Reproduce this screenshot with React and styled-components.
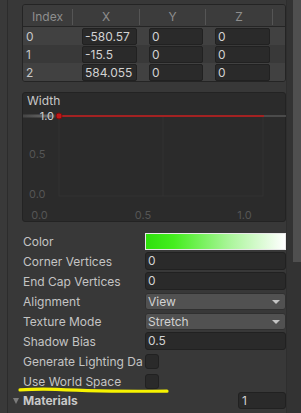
import React from "react"
import styled, { createGlobalStyle } from "styled-components"

const GlobalStyle = createGlobalStyle`
	html, body {
		margin: 0;
		padding: 0;
		background: #383838;
	}
	body {
		font-family: Inter, "Noto Sans", sans-serif;
		font-size: 12px;
		color: #c4c4c4;
	}
`

const points = [
	{ index: 0, x: "-580.57", y: "0", z: "0" },
	{ index: 1, x: "-15.5", y: "0", z: "0" },
	{ index: 2, x: "584.055", y: "0", z: "0" },
]

function App() {
	return (
		<Root>
			<GlobalStyle />
			<Gutter />
			<Main>
				<Table>
					<HeaderRow>
						<HeaderCell>Index</HeaderCell>
						<HeaderCell>X</HeaderCell>
						<HeaderCell>Y</HeaderCell>
						<HeaderCell>Z</HeaderCell>
						<HeaderCell $last />
					</HeaderRow>
					{points.map((p) => (
						<TableRow key={p.index} $odd={p.index % 2 === 1}>
							<IndexCell>{p.index}</IndexCell>
							<Cell>
								<NumField>{p.x}</NumField>
							</Cell>
							<Cell>
								<NumField>{p.y}</NumField>
							</Cell>
							<Cell>
								<NumField>{p.z}</NumField>
							</Cell>
							<span />
						</TableRow>
					))}
				</Table>

				<CurvePanel>
					<CurveTitle>Width</CurveTitle>
					<CurveGraph />
				</CurvePanel>

				<Props>
					<PropRow>
						<Label>Color</Label>
						<ColorSwatch />
					</PropRow>
					<PropRow>
						<Label>Corner Vertices</Label>
						<Field>0</Field>
					</PropRow>
					<PropRow>
						<Label>End Cap Vertices</Label>
						<Field>0</Field>
					</PropRow>
					<PropRow>
						<Label>Alignment</Label>
						<Dropdown>
							View
							<Arrow />
						</Dropdown>
					</PropRow>
					<PropRow>
						<Label>Texture Mode</Label>
						<Dropdown>
							Stretch
							<Arrow />
						</Dropdown>
					</PropRow>
					<PropRow>
						<Label>Shadow Bias</Label>
						<Field>0.5</Field>
					</PropRow>
					<PropRow>
						<Label>Generate Lighting Da</Label>
						<Checkbox />
					</PropRow>
					<PropRow>
						<Label>Use World Space</Label>
						<Checkbox />
					</PropRow>
					<Foldout>
						<FoldTitle>
							<Caret />
							Materials
						</FoldTitle>
						<SizeField>1</SizeField>
					</Foldout>
					<Scribble viewBox="0 0 152 8" width="152" height="8">
						<path
							d="M2 3.8 C 12 3.2, 28 3, 38 3.3 C 60 4.4, 100 5.4, 149 5.2"
							stroke="#f6f200"
							strokeWidth="3.2"
							fill="none"
							strokeLinecap="round"
						/>
					</Scribble>
				</Props>
			</Main>
			<Scrollbar>
				<Thumb />
			</Scrollbar>
		</Root>
	)
}

function CurveGraph() {
	return (
		<GraphSvg width="264" height="114" viewBox="0 0 264 114">
			<defs>
				<linearGradient id="hl" x1="0" x2="1" y1="0" y2="0">
					<stop offset="0" stopColor="#454545" />
					<stop offset="0.8" stopColor="#6a6a6a" />
					<stop offset="1" stopColor="#6a6a6a" stopOpacity="0" />
				</linearGradient>
			</defs>
			<rect x="36" y="9" width="204" height="80" fill="none" stroke="#333" />
			<line x1="140" y1="9" x2="140" y2="89" stroke="#333" />
			<rect x="0" y="7.5" width="34" height="3" fill="url(#hl)" />
			<line x1="36" y1="9" x2="241" y2="9" stroke="#a32222" strokeWidth="2" />
			<line x1="241" y1="9" x2="264" y2="9" stroke="#6c6c6c" strokeWidth="1" />
			<circle cx="36" cy="9" r="3" fill="#c01818" stroke="#7a0d0d" strokeWidth="1" />
			<AxisText x="31" y="13" textAnchor="end" $bright>
				1.0
			</AxisText>
			<AxisText x="6" y="51">0.5</AxisText>
			<AxisText x="6" y="91">0.0</AxisText>
			<AxisText x="16.5" y="112" textAnchor="middle">
				0.0
			</AxisText>
			<AxisText x="120" y="112" textAnchor="middle">
				0.5
			</AxisText>
			<AxisText x="221.5" y="112" textAnchor="middle">
				1.0
			</AxisText>
		</GraphSvg>
	)
}

const Root = styled.div`
	display: flex;
	width: 301px;
	height: 413px;
	overflow: hidden;
	background: #383838;
`

const Gutter = styled.div`
	width: 7px;
	flex: none;
	background: #393939;
	border-right: 1px solid #2c2c2c;
`

const Main = styled.div`
	flex: 1;
	padding: 4px 0 0 14px;
	display: flex;
	flex-direction: column;
	min-width: 0;
`

const Scrollbar = styled.div`
	width: 14px;
	flex: none;
	display: flex;
	justify-content: flex-end;
	background: #333;
	border-left: 1px solid #2e2e2e;
`

const Thumb = styled.div`
	width: 8px;
	height: 262px;
	background: #4f4f4f;
`

const Table = styled.div`
	border: 1px solid #242424;
	border-radius: 3px;
	overflow: hidden;
`

const columns = "50px 67px 66px 67px 1fr"

const HeaderRow = styled.div`
	display: grid;
	grid-template-columns: ${columns};
	height: 21px;
	background: #3c3c3c;
	border-bottom: 1px solid #252525;
`

const HeaderCell = styled.div`
	display: flex;
	align-items: center;
	justify-content: center;
	color: #8e8e8e;
	font-size: 12px;
	border-right: ${(p) => (p.$last ? "none" : "1px solid #555")};
	margin: 4px 0 1px;
	line-height: 1;
`

const TableRow = styled.div`
	display: grid;
	grid-template-columns: ${columns};
	height: 18px;
	background: ${(p) => (p.$odd ? "#393939" : "#414141")};
	align-items: center;
`

const IndexCell = styled.div`
	padding-left: 3px;
	color: #c8c8c8;
`

const Cell = styled.div`
	padding: 0 3px 0 9px;
	height: 100%;
	display: flex;
	align-items: center;
`

const NumField = styled.div`
	flex: 1;
	height: 17px;
	box-sizing: border-box;
	background: #2a2a2a;
	border: 1px solid #212121;
	border-radius: 2px;
	padding-left: 2px;
	line-height: 15px;
	color: #d2d2d2;
	white-space: nowrap;
	overflow: hidden;
`

const CurvePanel = styled.div`
	margin-top: 10px;
	height: 130px;
	box-sizing: border-box;
	background: #2b2b2b;
	border: 1px solid #232323;
	border-radius: 3px;
	display: flex;
	flex-direction: column;
`

const CurveTitle = styled.div`
	height: 14px;
	line-height: 16px;
	padding-left: 4px;
	color: #c8c8c8;
`

const GraphSvg = styled.svg`
	display: block;
`

const AxisText = styled.text`
	font-family: Inter, "Noto Sans", sans-serif;
	font-size: 11px;
	fill: ${(p) => (p.$bright ? "#cfcfcf" : "#555")};
`

const Props = styled.div`
	position: relative;
	margin-top: 9px;
	display: flex;
	flex-direction: column;
`

const PropRow = styled.div`
	display: grid;
	grid-template-columns: 122px 1fr;
	height: 20px;
	align-items: center;
	padding-left: 1px;
`

const Label = styled.div`
	color: #c4c4c4;
	white-space: nowrap;
	overflow: hidden;
`

const Field = styled.div`
	height: 18px;
	box-sizing: border-box;
	background: #2a2a2a;
	border: 1px solid #212121;
	border-radius: 3px;
	padding-left: 2px;
	line-height: 16px;
	color: #d2d2d2;
`

const ColorSwatch = styled.div`
	height: 17px;
	box-sizing: border-box;
	border: 1px solid #e8e8e8;
	background: linear-gradient(to right, #2ee00c 0%, #44ee1e 20%, #aaf59a 60%, #ffffff 100%);
`

const Dropdown = styled.div`
	position: relative;
	height: 17px;
	box-sizing: border-box;
	background: #515151;
	border: 1px solid #303030;
	border-radius: 3px;
	padding-left: 2px;
	line-height: 15px;
	color: #d2d2d2;
`

const Arrow = styled.span`
	position: absolute;
	right: 5px;
	top: 6px;
	width: 0;
	height: 0;
	border-left: 4px solid transparent;
	border-right: 4px solid transparent;
	border-top: 4px solid #c4c4c4;
`

const Checkbox = styled.div`
	width: 14px;
	height: 15px;
	box-sizing: border-box;
	background: #2a2a2a;
	border: 1px solid #212121;
	border-radius: 3px;
`

const Foldout = styled.div`
	display: flex;
	align-items: center;
	justify-content: space-between;
	height: 19px;
	margin-left: -9px;
`

const FoldTitle = styled.div`
	display: flex;
	align-items: center;
	gap: 4px;
	font-weight: bold;
	color: #c8c8c8;
`

const Caret = styled.span`
	width: 0;
	height: 0;
	border-left: 3.5px solid transparent;
	border-right: 3.5px solid transparent;
	border-top: 6px solid #7c7c7c;
`

const SizeField = styled(Field)`
	width: 48px;
	height: 17px;
	line-height: 15px;
	padding-left: 3px;
`

const Scribble = styled.svg`
	position: absolute;
	left: -4px;
	top: 155px;
	pointer-events: none;
`

export default App
